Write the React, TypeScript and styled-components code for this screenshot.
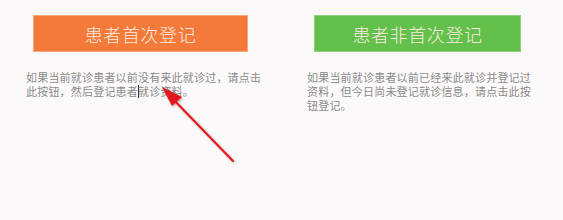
import styled, { createGlobalStyle } from 'styled-components'

const GlobalStyle = createGlobalStyle`
  html, body {
    margin: 0;
    padding: 0;
    background: #fcf9fa;
  }
  body {
    font-family: "Noto Sans CJK SC", "Noto Sans", sans-serif;
  }
`

const Page = styled.div`
  position: relative;
  width: 563px;
  height: 220px;
  display: flex;
  background: #fcf9fa;
`

const Column = styled.div<{ width: number }>`
  width: ${(p) => p.width}px;
  padding-top: 15px;
  display: flex;
  flex-direction: column;
`

const Button = styled.div<{ color: string; edge: string; width: number; offset: number }>`
  box-sizing: border-box;
  width: ${(p) => p.width}px;
  height: 37px;
  margin-left: ${(p) => p.offset}px;
  background: ${(p) => p.color};
  border: 1px solid ${(p) => p.edge};
  color: #fdebe0;
  font-size: 18px;
  font-weight: 300;
  letter-spacing: 0.6px;
  display: flex;
  align-items: center;
  justify-content: center;
`

const Hint = styled.p<{ width: number }>`
  margin: 18px 0 0 26px;
  width: ${(p) => p.width}px;
  color: #8a8a8a;
  font-size: 11px;
  letter-spacing: 0.2px;
  line-height: 14px;
`

const Caret = styled.span`
  display: inline-block;
  width: 1px;
  height: 13px;
  margin-right: -1px;
  background: #333;
  vertical-align: -2px;
`

const Arrow = styled.svg`
  position: absolute;
  left: 0;
  top: 0;
  pointer-events: none;
`

export default function App() {
  return (
    <>
      <GlobalStyle />
      <Page>
        <Column width={281}>
          <Button color="#f47a39" edge="#f9a77c" width={215} offset={33}>
            患者首次登记
          </Button>
          <Hint width={240}>
            如果当前就诊患者以前没有来此就诊过，请点击此按钮，然后登记患者<Caret />就诊资料。
          </Hint>
        </Column>
        <Column width={282}>
          <Button color="#63c04a" edge="#8fd27c" width={207} offset={33}>
            患者非首次登记
          </Button>
          <Hint width={230}>
            如果当前就诊患者以前已经来此就诊并登记过资料，但今日尚未登记就诊信息，请点击此按钮登记。
          </Hint>
        </Column>
        <Arrow width="563" height="220" viewBox="0 0 563 220">
          <defs>
            <filter id="shade" x="-20%" y="-20%" width="140%" height="140%">
              <feDropShadow dx="1" dy="1" stdDeviation="1" floodColor="#000" floodOpacity="0.35" />
            </filter>
          </defs>
          <g filter="url(#shade)">
            <line x1="233" y1="161" x2="170" y2="96" stroke="#e3191b" strokeWidth="2" strokeLinecap="round" />
            <polygon points="162,87 182,97 172,106" fill="#e3191b" />
          </g>
        </Arrow>
      </Page>
    </>
  )
}
